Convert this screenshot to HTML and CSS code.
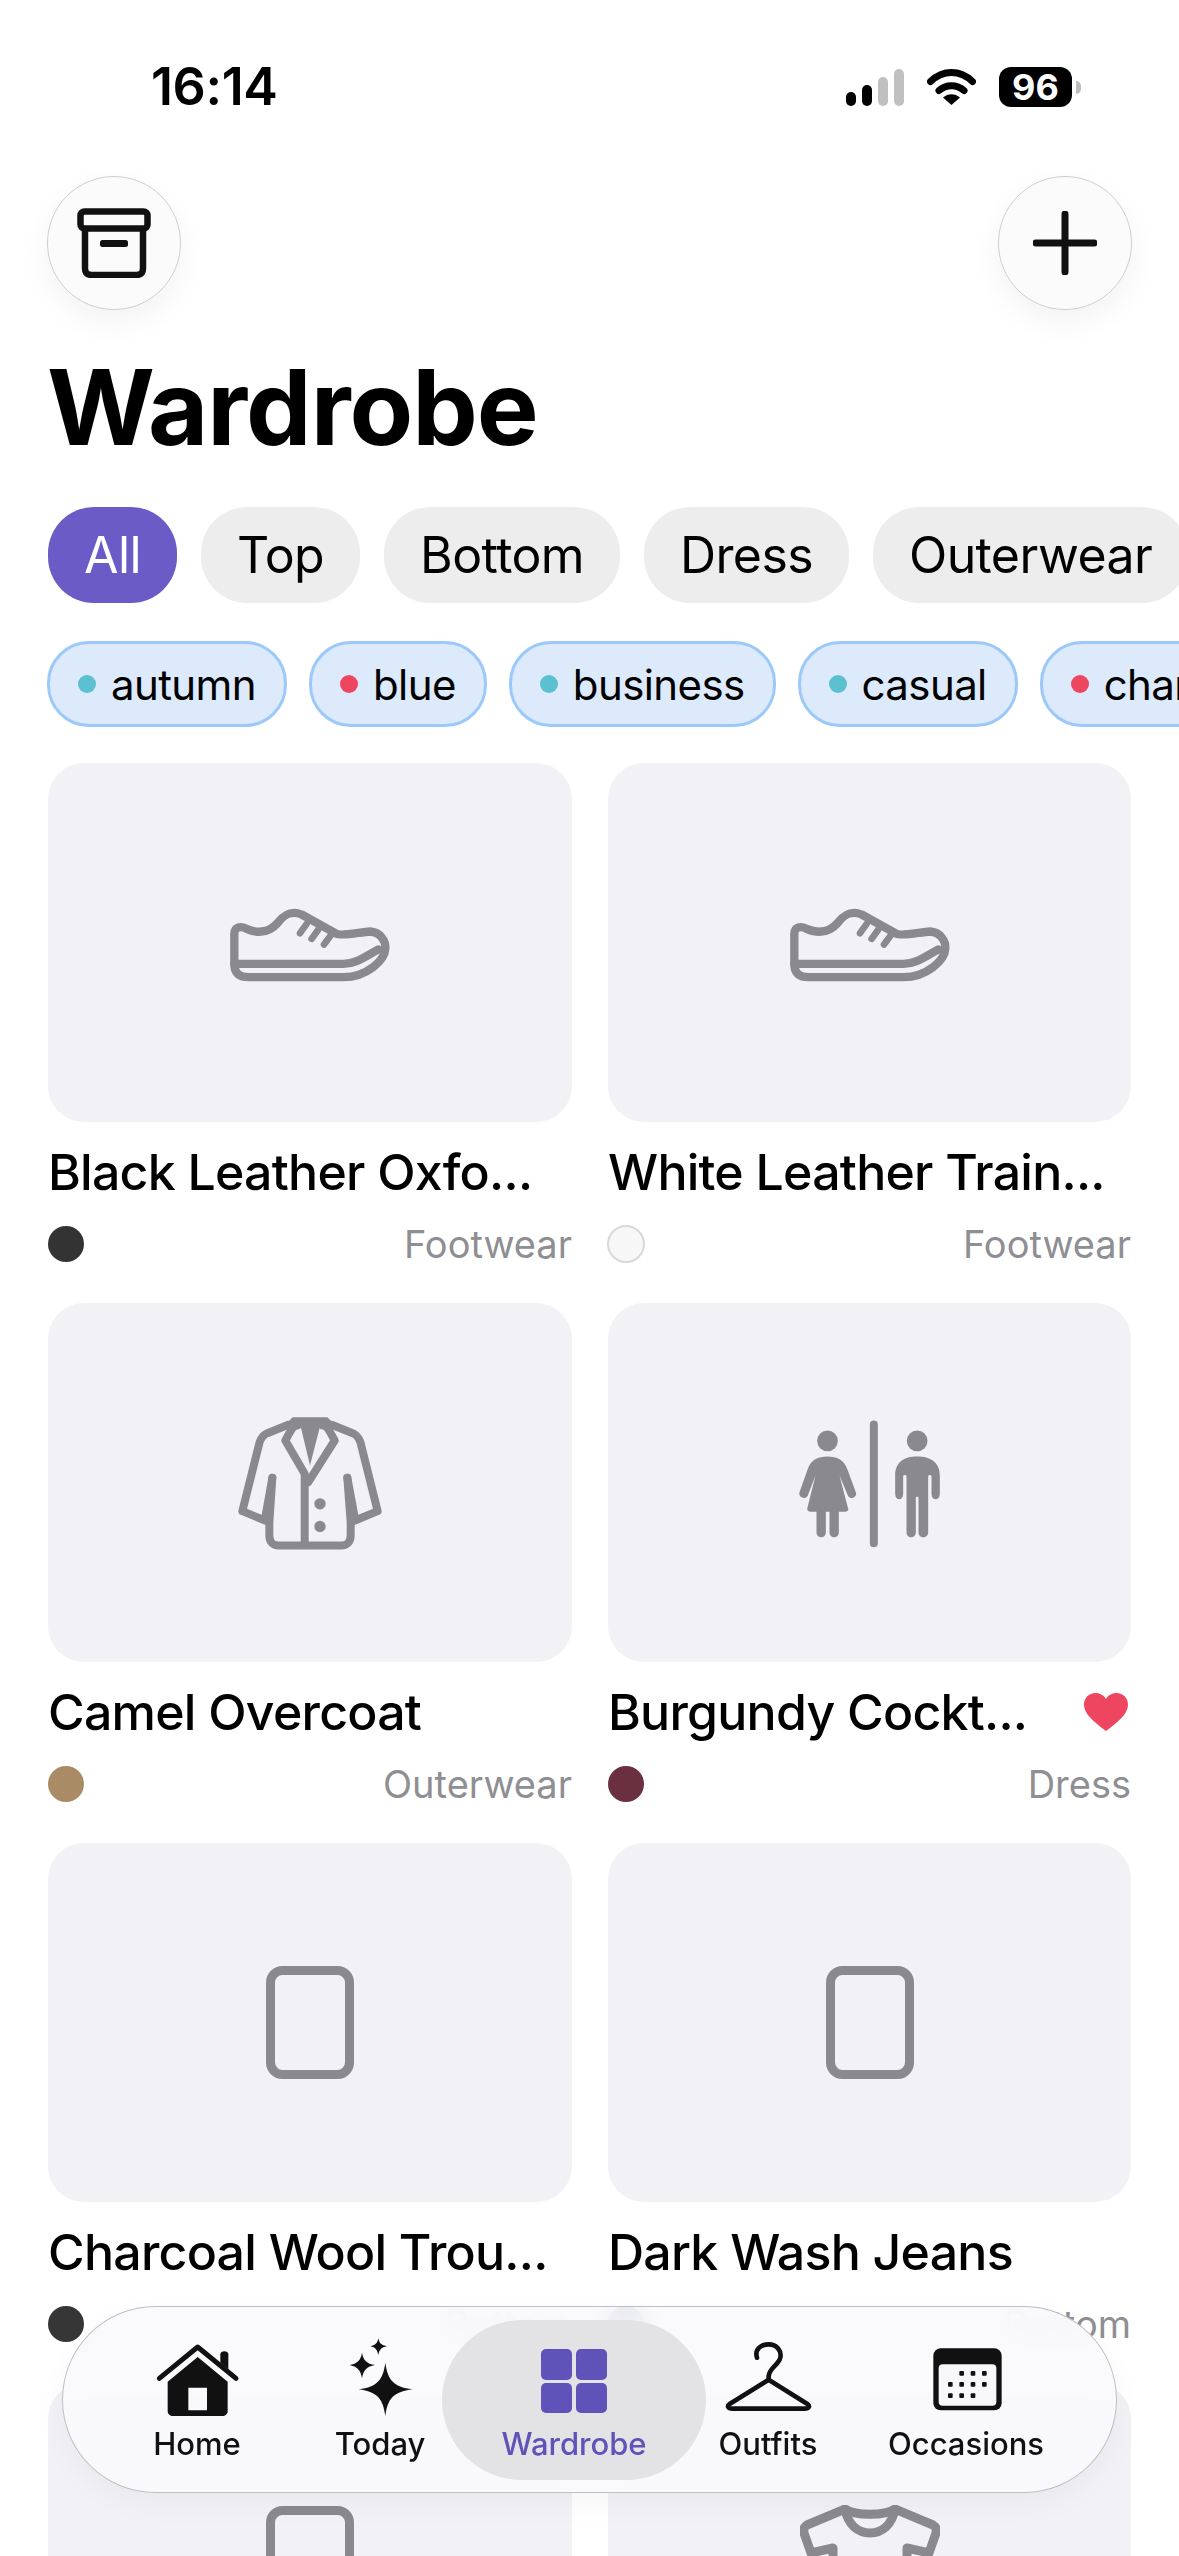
FILE: index.html
```html
<!DOCTYPE html>
<html lang="en">
<head>
<meta charset="utf-8">
<title>Wardrobe</title>
<link rel="stylesheet" href="styles.css">
</head>
<body>
<div class="screen">
  <header class="status">
    <span class="time">16:14</span>
    <div class="status-icons">
      <div class="signal">
        <i class="bar b1"></i><i class="bar b2"></i><i class="bar b3 off"></i><i class="bar b4 off"></i>
      </div>
      <svg class="wifi" viewBox="0 0 49 37"><path d="M3.500 13.500C16 1.500 33 1.500 45.500 13.500" fill="none" stroke="#000" stroke-width="7" stroke-linecap="round"/><path d="M12 22.500C19 16 30 16 37 22.500" fill="none" stroke="#000" stroke-width="7" stroke-linecap="round"/><path d="M24.500 37L16 29.500C21 25 28 25 33 29.500Z" fill="#000"/></svg>
      <div class="battery"><span class="battery-body">96</span><i class="battery-nub"></i></div>
    </div>
  </header>

  <div class="toolbar">
    <button class="round-btn">
      <svg class="tool-icon archive" viewBox="0 0 74 70"><rect x="3.500" y="3.500" width="67" height="17" rx="4" fill="none" stroke="#111" stroke-width="6.500"/><path d="M8 20V60C8 65 10 67 15 67H59C64 67 66 65 66 60V20" fill="none" stroke="#111" stroke-width="6.500"/><rect x="23" y="32" width="28" height="7" rx="2.500" fill="#111"/></svg>
    </button>
    <button class="round-btn">
      <svg class="tool-icon" viewBox="0 0 64 64"><path d="M32 3V61M3 32H61" fill="none" stroke="#111" stroke-width="7" stroke-linecap="round"/></svg>
    </button>
  </div>

  <h1 class="title">Wardrobe</h1>

  <div class="chips">
    <span class="chip active">All</span>
    <span class="chip">Top</span>
    <span class="chip">Bottom</span>
    <span class="chip">Dress</span>
    <span class="chip">Outerwear</span>
    <span class="chip">Footwear</span>
  </div>

  <div class="tags">
    <span class="tag"><i class="tag-dot teal"></i>autumn</span>
    <span class="tag"><i class="tag-dot red"></i>blue</span>
    <span class="tag"><i class="tag-dot teal"></i>business</span>
    <span class="tag"><i class="tag-dot teal"></i>casual</span>
    <span class="tag"><i class="tag-dot red"></i>chambray</span>
  </div>

  <main class="grid">
    <article class="card">
      <div class="thumb"><svg class="icon-shoe" viewBox="30 37.500 600 300"><g fill="none" stroke="#8a8a8e" stroke-width="25" stroke-linecap="round" stroke-linejoin="round"><path d="M103 250V160C103 140 120 135 140 145C170 158 205 160 235 125C255 100 275 90 305 102L410 160C425 168 480 155 510 153C540 155 558 180 556 205C554 240 500 290 430 290H145C120 290 103 280 103 250Z"/><path d="M103 250H430C470 250 500 225 535 207"/><path d="M300 158L320 130M335 175L355 147M372 192L392 165" stroke-width="20"/></g></svg></div>
      <h2 class="name">Black Leather Oxfo...</h2>
      <div class="meta"><i class="swatch" style="background:#333333"></i><span class="cat">Footwear</span></div>
    </article>
    <article class="card">
      <div class="thumb"><svg class="icon-shoe" viewBox="30 37.500 600 300"><g fill="none" stroke="#8a8a8e" stroke-width="25" stroke-linecap="round" stroke-linejoin="round"><path d="M103 250V160C103 140 120 135 140 145C170 158 205 160 235 125C255 100 275 90 305 102L410 160C425 168 480 155 510 153C540 155 558 180 556 205C554 240 500 290 430 290H145C120 290 103 280 103 250Z"/><path d="M103 250H430C470 250 500 225 535 207"/><path d="M300 158L320 130M335 175L355 147M372 192L392 165" stroke-width="20"/></g></svg></div>
      <h2 class="name">White Leather Train...</h2>
      <div class="meta"><i class="swatch ring" style="background:#f7f7f7"></i><span class="cat">Footwear</span></div>
    </article>
    <article class="card">
      <div class="thumb"><svg class="icon-coat" viewBox="0 22.500 600 510"><g fill="none" stroke="#8a8a8e" stroke-width="24" stroke-linecap="round" stroke-linejoin="round"><path d="M235 103L172 128C158 134 152 145 148 158L97 362L165 390"/><path d="M365 103L428 128C442 134 448 145 452 158L503 362L435 390"/><path d="M187 262L178 395V435C178 455 190 465 205 465H395C410 465 422 455 422 435V395L412 262"/><path d="M187 262L165 385M412 262L435 385"/><path d="M262 105C250 105 245 115 238 128L226 150L284 250V460"/><path d="M338 105C350 105 355 115 362 128L374 150L295 275"/></g><path d="M248 80H352L372 100L330 108L300 225L272 108L228 100Z" fill="#8a8a8e"/><circle cx="330" cy="340" r="17" fill="#8a8a8e"/><circle cx="330" cy="408" r="17" fill="#8a8a8e"/></svg></div>
      <h2 class="name">Camel Overcoat</h2>
      <div class="meta"><i class="swatch" style="background:#a98c66"></i><span class="cat">Outerwear</span></div>
    </article>
    <article class="card">
      <div class="thumb"><svg class="icon-rest" viewBox="-1.500 7.500 540 480"><g fill="#8a8a8e"><circle cx="141" cy="121" r="31"/><rect x="268" y="60" width="24" height="380" rx="12"/><circle cx="410" cy="121" r="31"/><path d="M141 168C112 168 92 178 82 205L57 275C52 290 75 300 82 285L105 225L80 325C80 330 85 334 90 334H108V395C108 415 136 415 136 395V334H147V395C147 415 175 415 175 395V334H194C200 334 205 330 203 325L177 225L202 285C208 300 232 290 226 275L200 205C190 178 170 168 141 168Z"/><path d="M410 168C370 168 344 185 344 225V280C344 302 368 302 368 280V228C368 222 378 222 378 228V395C378 415 406 415 406 395V292C406 288 414 288 414 292V395C414 415 443 415 443 395V228C443 222 453 222 453 228V280C453 302 478 302 478 280V225C478 185 450 168 410 168Z"/></g></svg></div>
      <div class="name-row"><h2 class="name">Burgundy Cockt...</h2><svg class="heart" viewBox="0 0 44 38"><path d="M22 38C9 28 0 21 0 11.500C0 5 5 0 11.500 0C16 0 20 2.500 22 6C24 2.500 28 0 32.500 0C39 0 44 5 44 11.500C44 21 35 28 22 38Z" fill="#ee4560"/></svg></div>
      <div class="meta"><i class="swatch" style="background:#6b3040"></i><span class="cat">Dress</span></div>
    </article>
    <article class="card">
      <div class="thumb"><svg class="icon-rect" viewBox="0 0 88 113"><rect x="4.500" y="4.500" width="79" height="104" rx="12" fill="none" stroke="#8a8a8e" stroke-width="9"/></svg></div>
      <h2 class="name">Charcoal Wool Trou...</h2>
      <div class="meta"><i class="swatch" style="background:#363636"></i><span class="cat">Bottom</span></div>
    </article>
    <article class="card">
      <div class="thumb"><svg class="icon-rect" viewBox="0 0 88 113"><rect x="4.500" y="4.500" width="79" height="104" rx="12" fill="none" stroke="#8a8a8e" stroke-width="9"/></svg></div>
      <h2 class="name">Dark Wash Jeans</h2>
      <div class="meta"><i class="swatch" style="background:#26304f"></i><span class="cat">Bottom</span></div>
    </article>
    <article class="card">
      <div class="thumb"><svg class="icon-rect" viewBox="0 0 88 113"><rect x="4.500" y="4.500" width="79" height="104" rx="12" fill="none" stroke="#8a8a8e" stroke-width="9"/></svg></div>
      <h2 class="name">Navy Chinos</h2>
      <div class="meta"><i class="swatch" style="background:#26304f"></i><span class="cat">Bottom</span></div>
    </article>
    <article class="card">
      <div class="thumb"><svg class="icon-tee" viewBox="0 0 140 115"><g fill="none" stroke="#8a8a8e" stroke-width="9" stroke-linejoin="round"><path d="M45 4L7 20C4 22 3 25 4 28L11 48L33 43V111H107V43L129 48L136 28C137 25 136 22 133 20L95 4C85 11 55 11 45 4Z"/><path d="M45 4C48 20 58 28 70 28C82 28 92 20 95 4"/></g></svg></div>
      <h2 class="name">Breton T-Shirt</h2>
      <div class="meta"><i class="swatch" style="background:#f7f7f7"></i><span class="cat">Top</span></div>
    </article>
  </main>

  <nav class="tabbar">
    <a class="tab">
      <svg class="tab-icon" viewBox="78 45 300 249"><path d="M115 172L230 78L345 172" fill="none" stroke="#111" stroke-width="15" stroke-linecap="round" stroke-linejoin="round"/><path d="M298 100C298 88 322 88 322 100V145L298 125Z" fill="#111"/><path d="M230 108L320 182V270C320 280 312 285 305 285H155C148 285 140 280 140 270V182ZM202 200V268H258V200Z" fill="#111" fill-rule="evenodd"/></svg>
      <span class="tab-label">Home</span>
    </a>
    <a class="tab">
      <svg class="tab-icon" viewBox="627 45 300 249"><g fill="#111"><path d="M793 125C800 175 815 197 875 205C815 213 800 235 793 285C786 235 771 213 713 205C771 197 786 175 793 125Z"/><path d="M723 95C727 118 737 128 762 132C737 136 727 148 723 172C719 148 709 136 685 132C709 128 719 118 723 95Z"/><path d="M772 52C775 67 781 73 798 76C781 79 775 87 772 102C769 87 763 79 748 76C763 73 769 67 772 52Z"/></g></svg>
      <span class="tab-label">Today</span>
    </a>
    <a class="tab current">
      <svg class="tab-icon" viewBox="0 0 100 83"><g fill="#5f52b8"><rect x="17" y="13" width="31" height="31" rx="5"/><rect x="52" y="13" width="31" height="31" rx="5"/><rect x="17" y="47" width="31" height="30" rx="5"/><rect x="52" y="47" width="31" height="30" rx="5"/></g></svg>
      <span class="tab-label">Wardrobe</span>
    </a>
    <a class="tab">
      <svg class="tab-icon" viewBox="51 45 300 249"><g fill="none" stroke="#111" stroke-width="14" stroke-linecap="round" stroke-linejoin="round"><path d="M168 110C160 85 180 70 203 70C228 70 242 90 238 110C235 130 205 140 203 165V176"/><path d="M203 176L318 248C328 255 325 263 310 263H95C80 263 77 255 87 248Z"/></g></svg>
      <span class="tab-label">Outfits</span>
    </a>
    <a class="tab">
      <svg class="tab-icon" viewBox="645 45 300 249"><rect x="697" y="82" width="205" height="186" rx="22" fill="#111"/><rect x="713" y="130" width="173" height="124" rx="12" fill="#f8f8fa"/><g fill="#111"><rect x="775" y="150" width="14" height="14" rx="3"/><rect x="809" y="150" width="14" height="14" rx="3"/><rect x="843" y="150" width="14" height="14" rx="3"/><rect x="741" y="183" width="14" height="14" rx="3"/><rect x="775" y="183" width="14" height="14" rx="3"/><rect x="809" y="183" width="14" height="14" rx="3"/><rect x="843" y="183" width="14" height="14" rx="3"/><rect x="741" y="217" width="14" height="14" rx="3"/><rect x="775" y="217" width="14" height="14" rx="3"/><rect x="809" y="217" width="14" height="14" rx="3"/></g></svg>
      <span class="tab-label">Occasions</span>
    </a>
  </nav>
</div>
</body>
</html>
```

FILE: styles.css
```css
* { box-sizing: border-box; }
html, body { margin: 0; padding: 0; background: #fff; }
.screen {
  position: relative;
  width: 1179px;
  height: 2556px;
  overflow: hidden;
  background: #fff;
  color: #000;
  font-family: Inter, "Noto Sans", sans-serif;
}

/* status bar */
.status {
  display: flex;
  justify-content: space-between;
  align-items: flex-start;
  height: 176px;
  padding: 57px 98px 0 151px;
}
.time { font-size: 52px; line-height: 60px; font-weight: 600; letter-spacing: -0.4px; }
.status-icons { display: flex; align-items: flex-start; padding-top: 10px; }
.signal { display: flex; align-items: flex-end; gap: 6px; height: 37px; margin-top: 2px; }
.bar { display: block; width: 10px; border-radius: 5px; background: #000; }
.bar.off { background: #c0c0c0; }
.b1 { height: 14px; }
.b2 { height: 21px; }
.b3 { height: 29px; }
.b4 { height: 37px; }
.wifi { display: block; width: 49px; height: 37px; margin: 1px 23px 0 23px; }
.battery { display: flex; align-items: center; height: 40px; }
.battery-body {
  display: flex;
  align-items: center;
  justify-content: center;
  width: 73px;
  height: 40px;
  border-radius: 12px;
  background: #000;
  color: #fff;
  font-size: 36px;
  font-weight: 700;
}
.battery-nub { display: block; width: 5px; height: 13px; margin-left: 4px; border-radius: 0 6px 6px 0; background: #bdbdbd; }

/* toolbar */
.toolbar { display: flex; justify-content: space-between; padding: 0 47px; }
.round-btn {
  display: flex;
  align-items: center;
  justify-content: center;
  width: 134px;
  height: 134px;
  padding: 0;
  border: 1.5px solid #cfcfcf;
  border-radius: 50%;
  background: #fbfbfb;
  box-shadow: 0 12px 30px rgba(0, 0, 0, 0.05);
}
.tool-icon { display: block; width: 64px; height: 64px; }
.tool-icon.archive { width: 74px; height: 70px; }

/* title */
.title {
  margin: 34px 0 0;
  padding-left: 47px;
  font-size: 104px;
  line-height: 126px;
  font-weight: 700;
  letter-spacing: -1px;
}

/* filter chips */
.chips { display: flex; gap: 24px; padding-left: 48px; margin-top: 37px; overflow: hidden; }
.chip {
  flex: none;
  display: flex;
  align-items: center;
  height: 96px;
  padding: 0 36px;
  border-radius: 46px;
  background: #ededed;
  font-size: 50px;
  letter-spacing: -0.6px;
}
.chip.active { background: #6a5bc7; color: #fff; }

.tags { display: flex; gap: 22px; padding-left: 47px; margin-top: 38px; overflow: hidden; }
.tag {
  flex: none;
  display: flex;
  align-items: center;
  gap: 15px;
  height: 86px;
  padding: 0 28px;
  border: 3px solid #9cc9f8;
  border-radius: 42px;
  background: #dceafc;
  font-size: 42px;
  letter-spacing: -0.6px;
}
.tag-dot { display: block; width: 18px; height: 18px; border-radius: 50%; }
.teal { background: #5bc0d0; }
.red { background: #ee4560; }

/* grid */
.grid {
  display: grid;
  grid-template-columns: 524px 523px;
  column-gap: 36px;
  row-gap: 39px;
  padding-left: 48px;
  margin-top: 36px;
}
.card { min-width: 0; }
.thumb {
  display: flex;
  align-items: center;
  justify-content: center;
  height: 359px;
  border-radius: 36px;
  background: #f1f1f6;
}
.icon-shoe { width: 200px; height: 100px; }
.icon-coat { width: 200px; height: 170px; }
.icon-rest { width: 180px; height: 160px; }
.icon-rect { width: 88px; height: 113px; }
.icon-tee { width: 140px; height: 115px; }
.name {
  margin: 20px 0 0;
  font-size: 50px;
  line-height: 60px;
  font-weight: 500;
  letter-spacing: -0.75px;
  white-space: nowrap;
}
.name-row { display: flex; justify-content: space-between; align-items: center; padding-right: 3px; }
.heart { width: 44px; height: 38px; margin-top: 20px; }
.meta { display: flex; justify-content: space-between; align-items: center; height: 40px; margin-top: 22px; }
.swatch { display: block; width: 36px; height: 36px; border-radius: 50%; }
.swatch.ring { width: 38px; height: 38px; margin-left: -1px; border: 2px solid #d8d8d8; }
.cat { font-size: 38px; line-height: 40px; color: #8e8e93; }

/* tab bar */
.tabbar {
  position: absolute;
  left: 62px;
  top: 2306px;
  width: 1055px;
  height: 187px;
  display: grid;
  grid-template-columns: 242px 124px 264px 124px 272px;
  padding: 13px 0 12px 13px;
  border: 1.5px solid rgba(165, 165, 170, 0.7);
  border-radius: 94px;
  background: rgba(250, 250, 252, 0.92);
  -webkit-backdrop-filter: blur(14px);
  backdrop-filter: blur(14px);
  box-shadow: 0 10px 30px rgba(0, 0, 0, 0.04);
}
.tab { display: flex; flex-direction: column; align-items: center; padding-top: 16px; color: #111; }
.tab.current { border-radius: 81px; background: #e3e3e6; color: #5f52b8; }
.tab-icon { display: block; flex: none; width: 100px; height: 83px; }
.tab-label { margin-top: 5px; font-size: 31px; line-height: 40px; font-weight: 500; white-space: nowrap; }
```
